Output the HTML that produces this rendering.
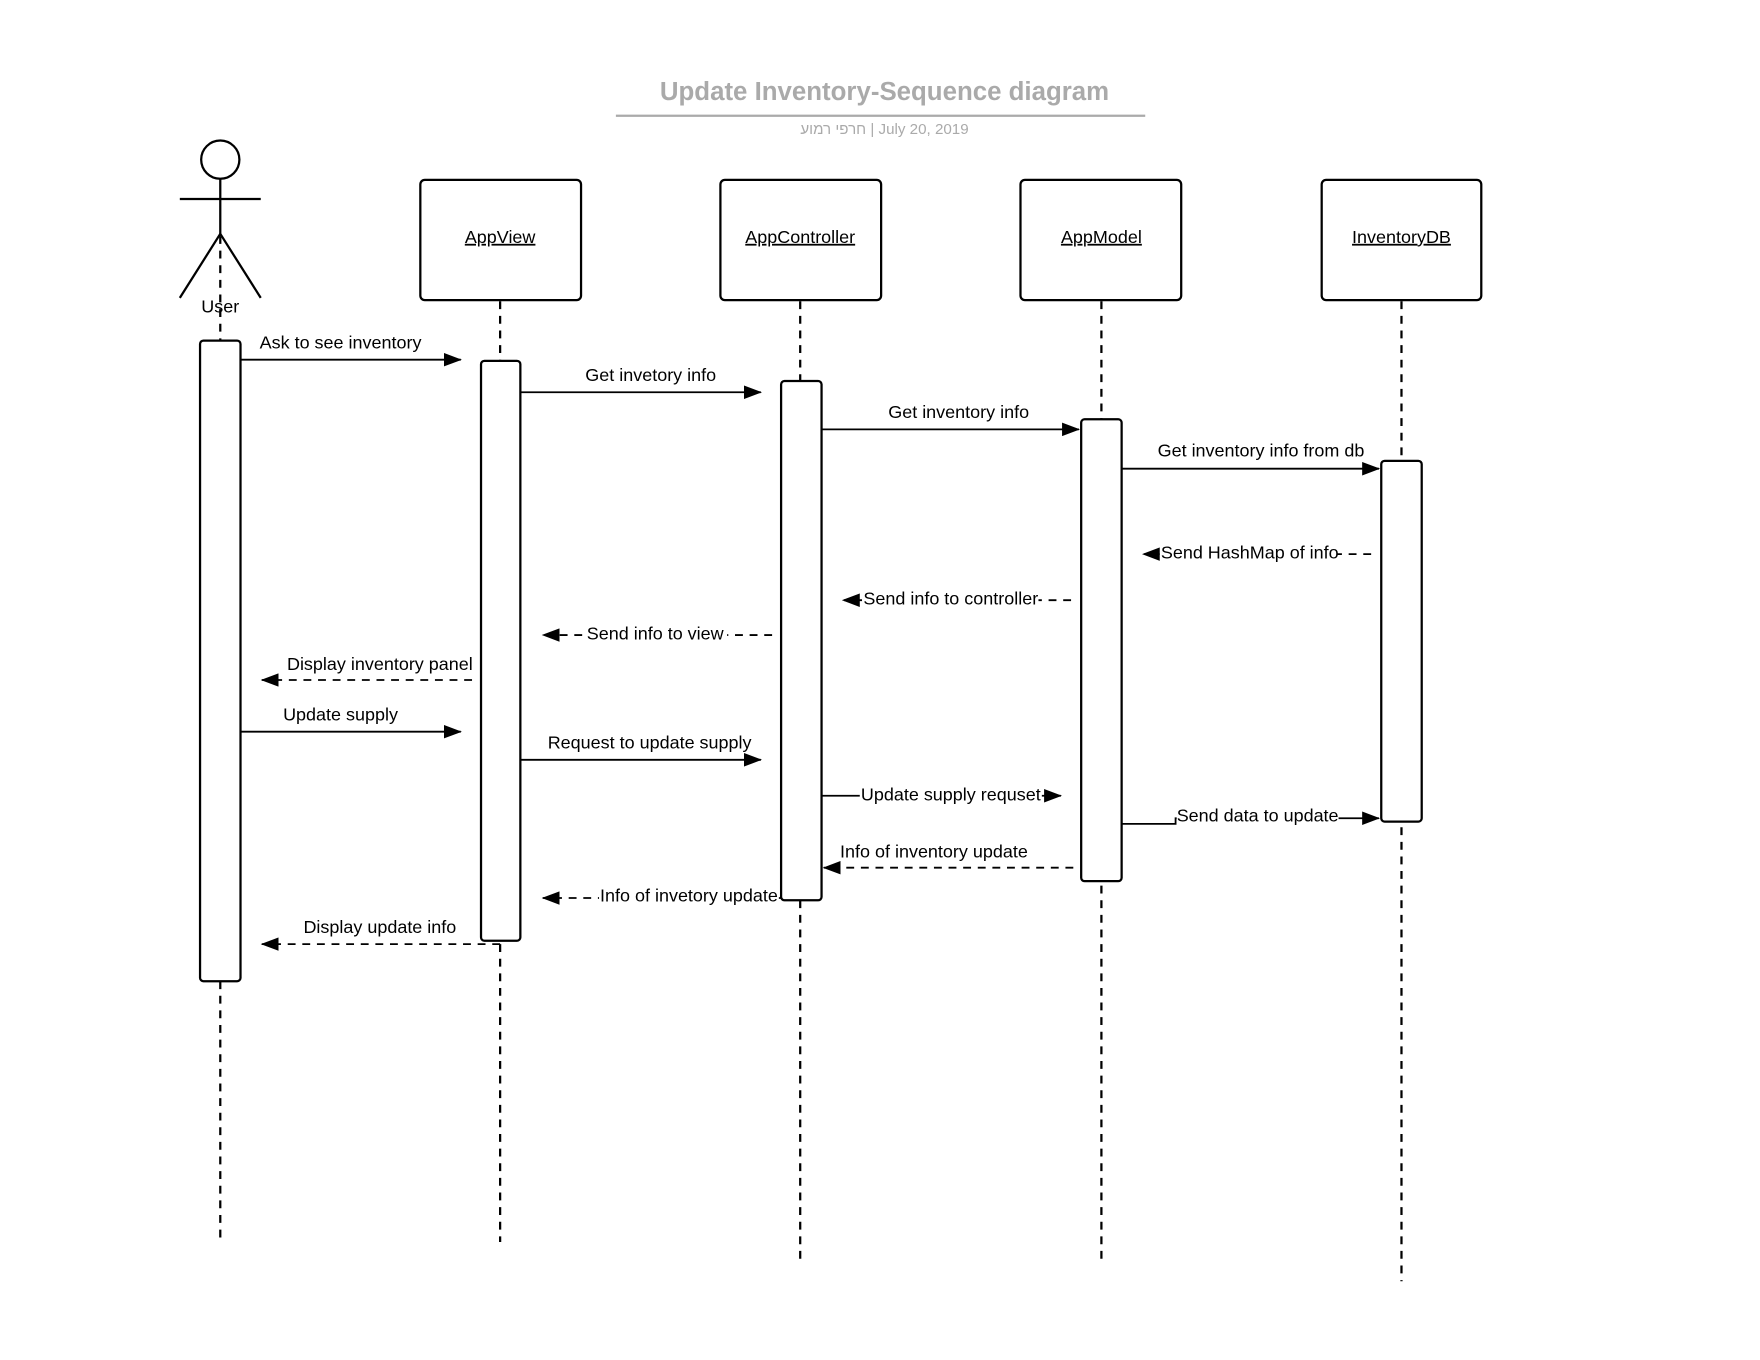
<!DOCTYPE html>
<html><head><meta charset="utf-8"><style>html,body{margin:0;padding:0;background:#fff;}svg{display:block;}</style></head>
<body>
<svg width="1760" height="1360" viewBox="0 0 1566 1210" xmlns="http://www.w3.org/2000/svg" font-family="Liberation Sans, Noto Sans CJK SC, sans-serif">
<defs>
<marker id="a" markerWidth="16" markerHeight="12" refX="15" refY="6" orient="auto" markerUnits="userSpaceOnUse"><path d="M0,0 L16,6 L0,12 z" fill="#000"/></marker>
</defs>
<rect width="1566" height="1210" fill="#fff"/>
<text x="787" y="89" text-anchor="middle" font-size="23" font-weight="bold" fill="#aaa">Update Inventory-Sequence diagram</text>
<line x1="548" y1="103" x2="1019" y2="103" stroke="#aaa" stroke-width="2"/>
<text x="787" y="119" text-anchor="middle" font-size="13.5" fill="#aaa"><tspan>חרפי רמוע</tspan>  |  July 20, 2019</text>
<g stroke="#000" stroke-width="2" fill="none">
<circle cx="196" cy="142" r="17"/>
<line x1="160" y1="177" x2="232" y2="177"/>
<line x1="196" y1="159" x2="196" y2="208"/>
<path d="M160,265 L196,208 L232,265"/>
</g>
<g stroke="#000" stroke-width="2" stroke-dasharray="7,6" fill="none">
<line x1="196" y1="210" x2="196" y2="1105"/>
<line x1="445" y1="268" x2="445" y2="1105"/>
<line x1="712" y1="268" x2="712" y2="1122"/>
<line x1="980" y1="268" x2="980" y2="1122"/>
<line x1="1247" y1="268" x2="1247" y2="1140"/>
</g>
<text x="196" y="278" text-anchor="middle" font-size="16">User</text>
<g stroke="#000" stroke-width="2" fill="#fff">
<rect x="374" y="160" width="143" height="107" rx="4"/>
<rect x="641" y="160" width="143" height="107" rx="4"/>
<rect x="908" y="160" width="143" height="107" rx="4"/>
<rect x="1176" y="160" width="142" height="107" rx="4"/>
<rect x="178" y="303" width="36" height="570" rx="3"/>
<rect x="428" y="321" width="35" height="516" rx="3"/>
<rect x="695" y="339" width="36" height="462" rx="3"/>
<rect x="962" y="373" width="36" height="411" rx="3"/>
<rect x="1229" y="410" width="36" height="321" rx="3"/>
</g>
<g font-size="16" text-anchor="middle" text-decoration="underline">
<text x="445" y="216">AppView</text>
<text x="712" y="216">AppController</text>
<text x="980" y="216">AppModel</text>
<text x="1247" y="216">InventoryDB</text>
</g>
<g stroke="#000" stroke-width="1.6" fill="none" marker-end="url(#a)">
<line x1="214" y1="320" x2="410" y2="320"/>
<line x1="463" y1="349" x2="677" y2="349"/>
<line x1="731" y1="382" x2="960" y2="382"/>
<line x1="998" y1="417" x2="1227" y2="417"/>
<line x1="214" y1="651" x2="410" y2="651"/>
<line x1="463" y1="676" x2="677" y2="676"/>
<line x1="731" y1="708" x2="944" y2="708"/>
<path d="M998,733 L1046,733 L1046,728 L1227,728"/>
</g>
<g stroke="#000" stroke-width="1.6" fill="none" stroke-dasharray="7,6" marker-end="url(#a)">
<line x1="1220" y1="493" x2="1017" y2="493"/>
<line x1="953" y1="534" x2="750" y2="534"/>
<line x1="687" y1="565" x2="483" y2="565"/>
<line x1="420" y1="605" x2="233" y2="605"/>
<line x1="955" y1="772" x2="733" y2="772"/>
<line x1="695" y1="799" x2="483" y2="799"/>
<line x1="445" y1="840" x2="233" y2="840"/>
</g>
<g fill="#fff">
<rect x="1032" y="482" width="158" height="20"/>
<rect x="767" y="523" width="157" height="20"/>
<rect x="519" y="554" width="128" height="20"/>
<rect x="765" y="697" width="162" height="20"/>
<rect x="1047" y="717" width="144" height="20"/>
<rect x="533" y="788" width="160" height="20"/>
</g>
<g font-size="16" text-anchor="middle" fill="#000">
<text x="303" y="310">Ask to see inventory</text>
<text x="579" y="339">Get invetory info</text>
<text x="853" y="372">Get inventory info</text>
<text x="1122" y="406">Get inventory info from db</text>
<text x="1112" y="497">Send HashMap of info</text>
<text x="846" y="538">Send info to controller</text>
<text x="583" y="569">Send info to view</text>
<text x="338" y="596">Display inventory panel</text>
<text x="303" y="641">Update supply</text>
<text x="578" y="666">Request to update supply</text>
<text x="846" y="712">Update supply requset</text>
<text x="1119" y="731">Send data to update</text>
<text x="831" y="763">Info of inventory update</text>
<text x="613" y="802">Info of invetory update</text>
<text x="338" y="830">Display update info</text>
</g>
</svg>
</body></html>
